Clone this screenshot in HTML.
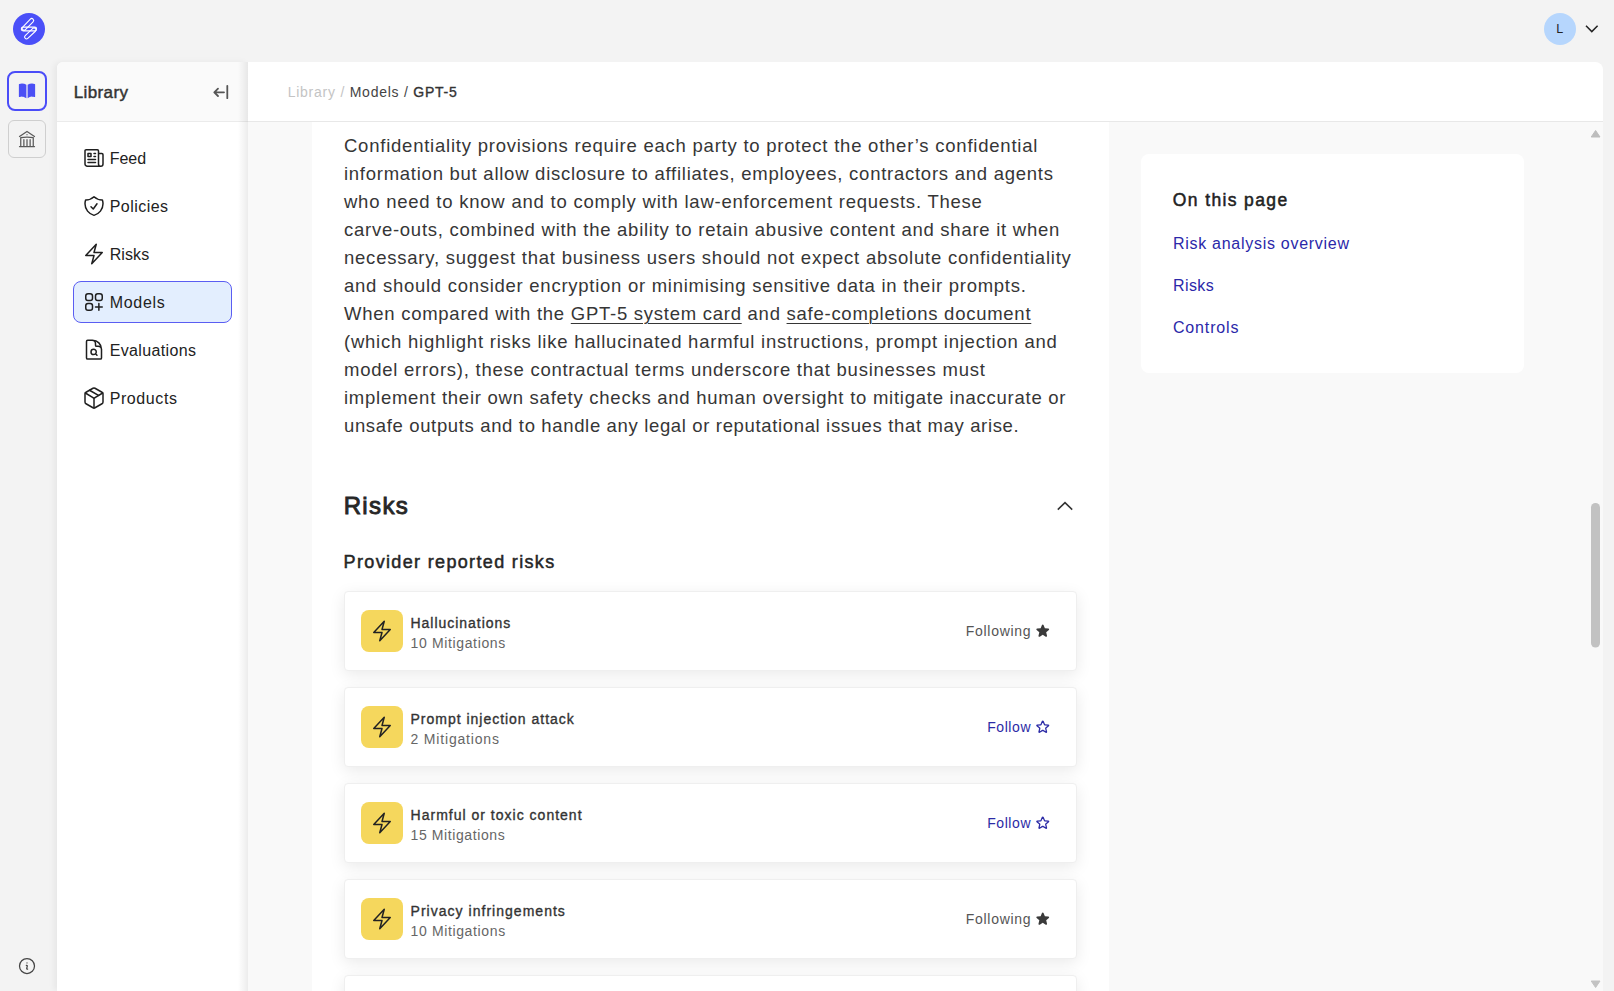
<!DOCTYPE html>
<html><head><meta charset="utf-8">
<style>
*{box-sizing:border-box;margin:0;padding:0}
html,body{width:1614px;height:991px;overflow:hidden;background:#f3f3f3;font-family:"Liberation Sans",sans-serif;color:#222}
.a{position:absolute}
.tx{position:absolute;white-space:nowrap}
.tx u{text-decoration:underline;text-decoration-thickness:1px;text-underline-offset:3px}
svg{position:absolute;overflow:visible}
.ic{fill:none;stroke:#1f1f1f;stroke-width:1.5;stroke-linecap:round;stroke-linejoin:round}
.card{position:absolute;left:344px;width:733px;height:80px;background:#fff;border:1px solid #efefef;border-radius:4px;box-shadow:0 4px 16px rgba(0,0,0,.085)}
.ysq{position:absolute;left:361px;width:42px;height:42px;background:#f5d75d;border-radius:8px}
</style></head><body>
<!-- logo -->
<div class="a" style="left:13px;top:13px;width:32px;height:32px;border-radius:50%;background:#4a4ff8"></div>
<svg style="left:0;top:0" width="60" height="60" viewBox="0 0 60 60">
  <g stroke="#fff" stroke-width="1.1" fill="none">
    <rect x="21.3" y="27.1" width="15.3" height="3.8" rx="1.9"/>
    <rect x="-7.4" y="-1.9" width="14.8" height="3.8" rx="1.9" transform="translate(27.9 24.4) rotate(-46)"/>
    <rect x="-7.1" y="-1.9" width="14.2" height="3.8" rx="1.9" transform="translate(30.3 33.4) rotate(-43)"/>
  </g>
</svg>
<!-- avatar -->
<div class="a" style="left:1544px;top:13px;width:32px;height:32px;border-radius:50%;background:#b6d6fd"></div>
<svg style="left:0;top:0" width="1614" height="60" viewBox="0 0 1614 60"><path d="M1586 25.8 L1591.8 31.6 L1597.6 25.8" fill="none" stroke="#222" stroke-width="1.5"/></svg>
<!-- rail -->
<div class="a" style="left:7px;top:71px;width:40px;height:40px;border:2px solid #4a4cf8;border-radius:8px;background:#f3f3f3"></div>
<svg style="left:17px;top:80.6px" width="20" height="20" viewBox="0 0 24 24"><path fill="#4b4ff5" d="M11.25 4.533A9.707 9.707 0 0 0 6 3a9.735 9.735 0 0 0-3.25.555.75.75 0 0 0-.5.707v14.25a.75.75 0 0 0 1 .707A8.237 8.237 0 0 1 6 18.75c1.995 0 3.823.707 5.25 1.886V4.533ZM12.75 20.636A8.214 8.214 0 0 1 18 18.75c.966 0 1.89.166 2.75.47a.75.75 0 0 0 1-.708V4.262a.75.75 0 0 0-.5-.707A9.735 9.735 0 0 0 18 3a9.707 9.707 0 0 0-5.25 1.533v16.103Z"/></svg>
<div class="a" style="left:8px;top:120px;width:38px;height:38px;border:1px solid #cfcfcf;border-radius:6px"></div>
<svg style="left:17px;top:128.8px" width="20" height="20" viewBox="0 0 24 24"><path class="ic" style="stroke:#5a5a5a" d="M12 21v-8.25M15.75 21v-8.25M8.25 21v-8.25M3 9l9-6 9 6m-1.5 12V10.332A48.36 48.36 0 0 0 12 9.750c-2.551 0-5.056.2-7.5.582V21M3 21h18M12 6.75h.008v.008H12V6.75Z"/></svg>
<svg style="left:17px;top:956px" width="20" height="20" viewBox="0 0 24 24"><path class="ic" style="stroke:#444" d="m11.25 11.25.041-.02a.75.75 0 0 1 1.063.852l-.708 2.836a.75.75 0 0 0 1.063.853l.041-.021M21 12a9 9 0 1 1-18 0 9 9 0 0 1 18 0Zm-9-3.75h.008v.008H12V8.25Z"/></svg>

<!-- sidebar -->
<div class="a" style="left:57px;top:62px;width:191px;height:929px;background:#fff;border-top-left-radius:6px;box-shadow:-3px 0 6px rgba(0,0,0,.05)"></div>
<div class="a" style="left:57px;top:62px;width:191px;height:60px;background:#fafafa;border-bottom:1px solid #ebebeb;border-top-left-radius:6px"></div>
<div class="a" style="left:238px;top:62px;width:10px;height:929px;background:linear-gradient(to right,rgba(0,0,0,0),rgba(0,0,0,.075))"></div>
<svg style="left:0;top:0" width="260" height="120" viewBox="0 0 260 120"><g fill="none" stroke="#555" stroke-width="1.6" stroke-linecap="round" stroke-linejoin="round"><path d="M218 88.6 L214.3 92.3 L218 96 M214.6 92.3 H224 M227.3 85.8 V98.2" stroke-width="1.8"/></g></svg>
<div class="a" style="left:73px;top:281px;width:159px;height:42px;background:#e3eefe;border:1px solid #5a5df2;border-radius:8px"></div>
<svg style="left:82px;top:146px" width="24" height="24" viewBox="0 0 24 24"><path class="ic" d="M12 7.5h1.5m-1.5 3h1.5m-7.5 3h7.5m-7.5 3h7.5m3-9h3.375c.621 0 1.125.504 1.125 1.125V18a2.250 2.250 0 0 1-2.250 2.250M16.5 7.5V18a2.250 2.250 0 0 0 2.250 2.250M16.5 7.5V4.875c0-.621-.504-1.125-1.125-1.125H4.125C3.504 3.750 3 4.254 3 4.875V18a2.250 2.250 0 0 0 2.250 2.250h13.5M6 7.5h3v3H6v-3Z"/></svg>
<svg style="left:82px;top:194px" width="24" height="24" viewBox="0 0 24 24"><path class="ic" d="M9 12.75 11.25 15 15 9.75m-3-7.036A11.959 11.959 0 0 1 3.598 6 11.99 11.99 0 0 0 3 9.749c0 5.592 3.824 10.29 9 11.623 5.176-1.332 9-6.030 9-11.622 0-1.31-.21-2.571-.598-3.751h-.152c-3.196 0-6.1-1.248-8.25-3.285Z"/></svg>
<svg style="left:82px;top:242px" width="24" height="24" viewBox="0 0 24 24"><path class="ic" d="m3.75 13.5 10.5-11.25L12 10.5h8.25L9.75 21.75 12 13.5H3.75Z"/></svg>
<svg style="left:82px;top:290px" width="24" height="24" viewBox="0 0 24 24"><path class="ic" d="M13.5 16.875h3.375m0 0h3.375m-3.375 0V13.5m0 3.375v3.375M6 10.5h2.25a2.25 2.25 0 0 0 2.25-2.25V6a2.25 2.25 0 0 0-2.25-2.25H6A2.25 2.25 0 0 0 3.75 6v2.25A2.25 2.25 0 0 0 6 10.5Zm0 9.75h2.25A2.25 2.25 0 0 0 10.5 18v-2.25a2.25 2.25 0 0 0-2.25-2.25H6a2.25 2.25 0 0 0-2.25 2.25V18A2.25 2.25 0 0 0 6 20.25Zm9.75-9.75H18a2.25 2.25 0 0 0 2.25-2.25V6A2.25 2.25 0 0 0 18 3.75h-2.25A2.25 2.25 0 0 0 13.5 6v2.25a2.25 2.25 0 0 0 2.25 2.25Z"/></svg>
<svg style="left:82px;top:338px" width="24" height="24" viewBox="0 0 24 24"><path class="ic" d="M19.5 14.25v-2.625a3.375 3.375 0 0 0-3.375-3.375h-1.5A1.125 1.125 0 0 1 13.5 7.125v-1.5a3.375 3.375 0 0 0-3.375-3.375H8.25m5.231 13.481L15 17.25m-4.5-15H5.625c-.621 0-1.125.504-1.125 1.125v16.5c0 .621.504 1.125 1.125 1.125h12.75c.621 0 1.125-.504 1.125-1.125V11.25a9 9 0 0 0-9-9Zm3.75 11.625a2.625 2.625 0 1 1-5.25 0 2.625 2.625 0 0 1 5.25 0Z"/></svg>
<svg style="left:82px;top:386px" width="24" height="24" viewBox="0 0 24 24"><g class="ic"><path d="M11 21.73a2 2 0 0 0 2 0l7-4A2 2 0 0 0 21 16V8a2 2 0 0 0-1-1.73l-7-4a2 2 0 0 0-2 0l-7 4A2 2 0 0 0 3 8v8a2 2 0 0 0 1 1.73z"/><path d="M12 22V12"/><path d="m3.3 7 7.703 4.734a2 2 0 0 0 1.994 0L20.7 7"/><path d="m7.5 4.27 9 5.15"/></g></svg>

<!-- main panel -->
<div class="a" style="left:248px;top:62px;width:1355px;height:929px;background:#f9f9f9;border-top-right-radius:8px"></div>
<div class="a" style="left:248px;top:62px;width:1355px;height:60px;background:#fff;border-bottom:1px solid #e8e8e8;border-top-right-radius:8px"></div>
<div class="a" style="left:312px;top:122px;width:797px;height:869px;background:#fff"></div>
<div class="a" style="left:1141px;top:154px;width:383px;height:219px;background:#fff;border-radius:8px"></div>
<!-- scrollbar -->
<svg style="left:0;top:0" width="1614" height="991" viewBox="0 0 1614 991">
  <path d="M1595.6 130.5 L1600 137 H1591.2 Z" fill="#bdbdbd" stroke="#bdbdbd" stroke-width="1" stroke-linejoin="round"/>
  <path d="M1595.6 987.5 L1600 981 H1591.2 Z" fill="#c3c3c3" stroke="#c3c3c3" stroke-width="1" stroke-linejoin="round"/>
  <rect x="1591" y="503" width="9" height="144.5" rx="4.5" fill="#c2c2c2"/>
  <path d="M1057.8 509.6 L1065 502.6 L1072.2 509.6" fill="none" stroke="#333" stroke-width="1.6"/>
</svg>
<!-- cards -->
<div class="card" style="top:591px"></div>
<div class="card" style="top:687px"></div>
<div class="card" style="top:783px"></div>
<div class="card" style="top:879px"></div>
<div class="card" style="top:975px"></div>
<div class="ysq" style="top:610px"></div>
<div class="ysq" style="top:706px"></div>
<div class="ysq" style="top:802px"></div>
<div class="ysq" style="top:898px"></div>
<svg style="left:370px;top:619px" width="24" height="24" viewBox="0 0 24 24"><path class="ic" style="stroke:#222" d="m3.75 13.5 10.5-11.25L12 10.5h8.25L9.75 21.75 12 13.5H3.75Z"/></svg>
<svg style="left:370px;top:715px" width="24" height="24" viewBox="0 0 24 24"><path class="ic" style="stroke:#222" d="m3.75 13.5 10.5-11.25L12 10.5h8.25L9.75 21.75 12 13.5H3.75Z"/></svg>
<svg style="left:370px;top:811px" width="24" height="24" viewBox="0 0 24 24"><path class="ic" style="stroke:#222" d="m3.75 13.5 10.5-11.25L12 10.5h8.25L9.75 21.75 12 13.5H3.75Z"/></svg>
<svg style="left:370px;top:907px" width="24" height="24" viewBox="0 0 24 24"><path class="ic" style="stroke:#222" d="m3.75 13.5 10.5-11.25L12 10.5h8.25L9.75 21.75 12 13.5H3.75Z"/></svg>
<svg style="left:1035.3px;top:623.2px" width="15.5" height="15.5" viewBox="0 0 24 24"><path fill="#3a3a3a" d="M10.788 3.21c.448-1.077 1.976-1.077 2.424 0l2.082 5.006 5.404.434c1.164.093 1.636 1.545.749 2.305l-4.117 3.527 1.257 5.273c.271 1.136-.964 2.033-1.96 1.425L12 18.354 7.373 21.18c-.996.608-2.231-.29-1.96-1.425l1.257-5.273-4.117-3.527c-.887-.76-.415-2.212.749-2.305l5.404-.434 2.082-5.005Z"/></svg>
<svg style="left:1035.3px;top:911.2px" width="15.5" height="15.5" viewBox="0 0 24 24"><path fill="#3a3a3a" d="M10.788 3.21c.448-1.077 1.976-1.077 2.424 0l2.082 5.006 5.404.434c1.164.093 1.636 1.545.749 2.305l-4.117 3.527 1.257 5.273c.271 1.136-.964 2.033-1.96 1.425L12 18.354 7.373 21.18c-.996.608-2.231-.29-1.96-1.425l1.257-5.273-4.117-3.527c-.887-.76-.415-2.212.749-2.305l5.404-.434 2.082-5.005Z"/></svg>
<svg style="left:1035.3px;top:719.2px" width="15.5" height="15.5" viewBox="0 0 24 24"><path fill="none" stroke="#2c2ba6" stroke-width="2" stroke-linejoin="round" d="M11.48 3.499a.562.562 0 0 1 1.04 0l2.125 5.111a.563.563 0 0 0 .475.345l5.518.442c.499.04.701.663.321.988l-4.204 3.602a.563.563 0 0 0-.182.557l1.285 5.385a.562.562 0 0 1-.84.61l-4.725-2.885a.562.562 0 0 0-.586 0L6.982 20.54a.562.562 0 0 1-.84-.61l1.285-5.386a.562.562 0 0 0-.182-.557l-4.204-3.602a.562.562 0 0 1 .321-.988l5.518-.442a.563.563 0 0 0 .475-.345L11.48 3.5Z"/></svg>
<svg style="left:1035.3px;top:815.2px" width="15.5" height="15.5" viewBox="0 0 24 24"><path fill="none" stroke="#2c2ba6" stroke-width="2" stroke-linejoin="round" d="M11.48 3.499a.562.562 0 0 1 1.04 0l2.125 5.111a.563.563 0 0 0 .475.345l5.518.442c.499.04.701.663.321.988l-4.204 3.602a.563.563 0 0 0-.182.557l1.285 5.385a.562.562 0 0 1-.84.61l-4.725-2.885a.562.562 0 0 0-.586 0L6.982 20.54a.562.562 0 0 1-.84-.61l1.285-5.386a.562.562 0 0 0-.182-.557l-4.204-3.602a.562.562 0 0 1 .321-.988l5.518-.442a.563.563 0 0 0 .475-.345L11.48 3.5Z"/></svg>
<div class="tx" style="left:73.68px;top:84.31px;font-size:17px;line-height:17px;font-weight:400;color:#333;letter-spacing:0.389px;-webkit-text-stroke:0.45px #333;">Library</div>
<div class="tx" style="left:109.64px;top:151.01px;font-size:16px;line-height:16px;font-weight:400;color:#222;letter-spacing:-0.023px;">Feed</div>
<div class="tx" style="left:109.64px;top:199.21px;font-size:16px;line-height:16px;font-weight:400;color:#222;letter-spacing:0.466px;">Policies</div>
<div class="tx" style="left:109.64px;top:247.01px;font-size:16px;line-height:16px;font-weight:400;color:#222;letter-spacing:0.123px;">Risks</div>
<div class="tx" style="left:109.64px;top:295.01px;font-size:16px;line-height:16px;font-weight:400;color:#222;letter-spacing:0.724px;">Models</div>
<div class="tx" style="left:109.64px;top:342.81px;font-size:16px;line-height:16px;font-weight:400;color:#222;letter-spacing:0.358px;">Evaluations</div>
<div class="tx" style="left:109.64px;top:390.71px;font-size:16px;line-height:16px;font-weight:400;color:#222;letter-spacing:0.608px;">Products</div>
<div class="tx" style="left:287.66px;top:84.95px;font-size:14px;line-height:14px;font-weight:400;color:#444;letter-spacing:0.756px;"><span style="color:#c4c4c4">Library /</span> Models / <span style="color:#333;-webkit-text-stroke:0.35px #333">GPT-5</span></div>
<div class="tx" style="left:343.99px;top:136.64px;font-size:18.5px;line-height:18.5px;font-weight:400;color:#363636;letter-spacing:0.770px;">Confidentiality provisions require each party to protect the other’s confidential</div>
<div class="tx" style="left:343.99px;top:164.64px;font-size:18.5px;line-height:18.5px;font-weight:400;color:#363636;letter-spacing:0.742px;">information but allow disclosure to affiliates, employees, contractors and agents</div>
<div class="tx" style="left:343.99px;top:192.64px;font-size:18.5px;line-height:18.5px;font-weight:400;color:#363636;letter-spacing:0.774px;">who need to know and to comply with law-enforcement requests. These</div>
<div class="tx" style="left:343.99px;top:220.64px;font-size:18.5px;line-height:18.5px;font-weight:400;color:#363636;letter-spacing:0.740px;">carve-outs, combined with the ability to retain abusive content and share it when</div>
<div class="tx" style="left:343.99px;top:248.64px;font-size:18.5px;line-height:18.5px;font-weight:400;color:#363636;letter-spacing:0.773px;">necessary, suggest that business users should not expect absolute confidentiality</div>
<div class="tx" style="left:343.99px;top:276.64px;font-size:18.5px;line-height:18.5px;font-weight:400;color:#363636;letter-spacing:0.732px;">and should consider encryption or minimising sensitive data in their prompts.</div>
<div class="tx" style="left:343.99px;top:304.64px;font-size:18.5px;line-height:18.5px;font-weight:400;color:#363636;letter-spacing:0.740px;">When compared with the <u>GPT-5 system card</u> and <u>safe-completions document</u></div>
<div class="tx" style="left:343.99px;top:332.64px;font-size:18.5px;line-height:18.5px;font-weight:400;color:#363636;letter-spacing:0.769px;">(which highlight risks like hallucinated harmful instructions, prompt injection and</div>
<div class="tx" style="left:343.99px;top:360.64px;font-size:18.5px;line-height:18.5px;font-weight:400;color:#363636;letter-spacing:0.749px;">model errors), these contractual terms underscore that businesses must</div>
<div class="tx" style="left:343.99px;top:388.64px;font-size:18.5px;line-height:18.5px;font-weight:400;color:#363636;letter-spacing:0.747px;">implement their own safety checks and human oversight to mitigate inaccurate or</div>
<div class="tx" style="left:343.99px;top:416.64px;font-size:18.5px;line-height:18.5px;font-weight:400;color:#363636;letter-spacing:0.650px;">unsafe outputs and to handle any legal or reputational issues that may arise.</div>
<div class="tx" style="left:343.66px;top:494.38px;font-size:24px;line-height:24px;font-weight:400;color:#262626;letter-spacing:1.357px;-webkit-text-stroke:0.9px #262626;">Risks</div>
<div class="tx" style="left:343.62px;top:552.96px;font-size:18px;line-height:18px;font-weight:400;color:#262626;letter-spacing:1.342px;-webkit-text-stroke:0.5px #262626;">Provider reported risks</div>
<div class="tx" style="left:410.56px;top:615.85px;font-size:14px;line-height:14px;font-weight:400;color:#333;letter-spacing:0.964px;-webkit-text-stroke:0.35px #333;">Hallucinations</div>
<div class="tx" style="left:410.56px;top:635.95px;font-size:14px;line-height:14px;font-weight:400;color:#666;letter-spacing:0.639px;">10 Mitigations</div>
<div class="tx" style="left:965.76px;top:624.05px;font-size:14px;line-height:14px;font-weight:400;color:#555;letter-spacing:0.707px;">Following</div>
<div class="tx" style="left:410.56px;top:711.85px;font-size:14px;line-height:14px;font-weight:400;color:#333;letter-spacing:0.981px;-webkit-text-stroke:0.35px #333;">Prompt injection attack</div>
<div class="tx" style="left:410.56px;top:731.95px;font-size:14px;line-height:14px;font-weight:400;color:#666;letter-spacing:0.817px;">2 Mitigations</div>
<div class="tx" style="left:987.16px;top:720.05px;font-size:14px;line-height:14px;font-weight:400;color:#2c2ba6;letter-spacing:0.586px;">Follow</div>
<div class="tx" style="left:410.56px;top:807.85px;font-size:14px;line-height:14px;font-weight:400;color:#333;letter-spacing:1.007px;-webkit-text-stroke:0.35px #333;">Harmful or toxic content</div>
<div class="tx" style="left:410.56px;top:827.95px;font-size:14px;line-height:14px;font-weight:400;color:#666;letter-spacing:0.593px;">15 Mitigations</div>
<div class="tx" style="left:987.16px;top:816.05px;font-size:14px;line-height:14px;font-weight:400;color:#2c2ba6;letter-spacing:0.586px;">Follow</div>
<div class="tx" style="left:410.56px;top:903.85px;font-size:14px;line-height:14px;font-weight:400;color:#333;letter-spacing:1.024px;-webkit-text-stroke:0.35px #333;">Privacy infringements</div>
<div class="tx" style="left:410.56px;top:923.95px;font-size:14px;line-height:14px;font-weight:400;color:#666;letter-spacing:0.631px;">10 Mitigations</div>
<div class="tx" style="left:965.76px;top:912.05px;font-size:14px;line-height:14px;font-weight:400;color:#555;letter-spacing:0.707px;">Following</div>
<div class="tx" style="left:1172.85px;top:191.69px;font-size:17.5px;line-height:17.5px;font-weight:400;color:#222;letter-spacing:1.370px;-webkit-text-stroke:0.5px #222;">On this page</div>
<div class="tx" style="left:1172.94px;top:235.66px;font-size:16px;line-height:16px;font-weight:400;color:#2b28a9;letter-spacing:0.722px;">Risk analysis overview</div>
<div class="tx" style="left:1172.94px;top:277.86px;font-size:16px;line-height:16px;font-weight:400;color:#2b28a9;letter-spacing:0.435px;">Risks</div>
<div class="tx" style="left:1172.94px;top:319.86px;font-size:16px;line-height:16px;font-weight:400;color:#2b28a9;letter-spacing:0.853px;">Controls</div>
<div class="tx" style="left:1556.25px;top:22.72px;font-size:12.5px;line-height:12.5px;font-weight:400;color:#222;letter-spacing:0.000px;">L</div>
</body></html>
